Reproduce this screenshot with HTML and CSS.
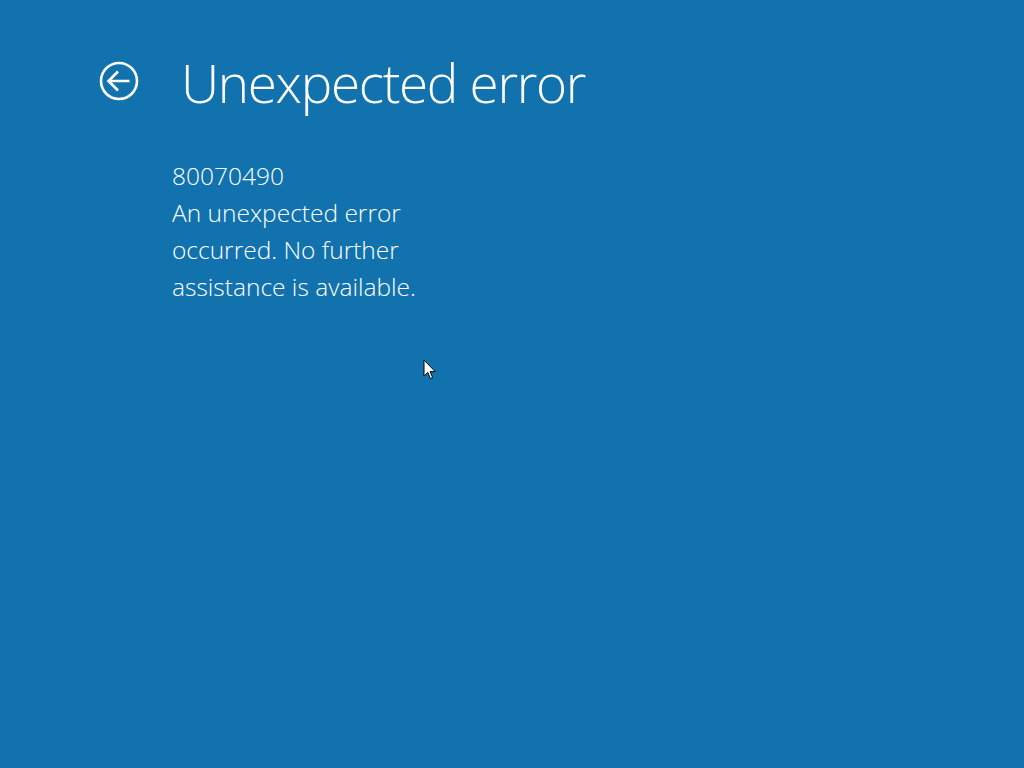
FILE: index.html
```html
<!DOCTYPE html>
<html>
<head>
<meta charset="utf-8">
<link rel="stylesheet" href="styles.css">
</head>
<body>
<div class="page">
  <header class="header">
    <svg class="back" width="42" height="42" viewBox="0 0 42 42">
      <circle cx="21" cy="21" r="18" fill="none" stroke="#fff" stroke-width="2.6"/>
      <path d="M10.5 21 H31.5 M20 11.5 L10.5 21 L20 30.5" fill="none" stroke="#fff" stroke-width="2.6" stroke-linejoin="miter"/>
    </svg>
    <h1 class="title">Unexpected error</h1>
  </header>
  <div class="body">
    <p class="code">80070490</p>
    <p class="msg">An unexpected error<br>occurred. No further<br>assistance is available.</p>
  </div>
  <svg class="cursor" width="14" height="22" viewBox="0 0 14 22">
    <path d="M1 1 V17 L4.8 13.4 L7.4 19.6 L9.6 18.6 L7.1 12.6 L12.2 12.6 Z" fill="#fff" stroke="#000" stroke-width="1"/>
  </svg>
</div>
</body>
</html>
```
FILE: styles.css
```css
html, body {
  margin: 0;
  padding: 0;
  background: #1172ad;
}
.page {
  position: relative;
  width: 1024px;
  height: 768px;
  overflow: hidden;
  color: #fff;
  font-family: "Open Sans", "DejaVu Sans", sans-serif;
  font-weight: 300;
}
.header {
  display: flex;
  align-items: center;
  gap: 40px;
  padding: 50px 0 0 98px;
  height: 66px;
}
.back {
  flex: none;
  margin-top: -5px;
}
.title {
  margin: 0 0 0 1px;
  font-size: 53px;
  font-weight: 300;
  letter-spacing: -1.3px;
  line-height: 66px;
}
.body {
  padding: 41px 0 0 172px;
}
.code, .msg {
  margin: 0;
  font-size: 24.5px;
  line-height: 37px;
  font-weight: 300;
}
.cursor {
  position: absolute;
  left: 423px;
  top: 359px;
}
```
